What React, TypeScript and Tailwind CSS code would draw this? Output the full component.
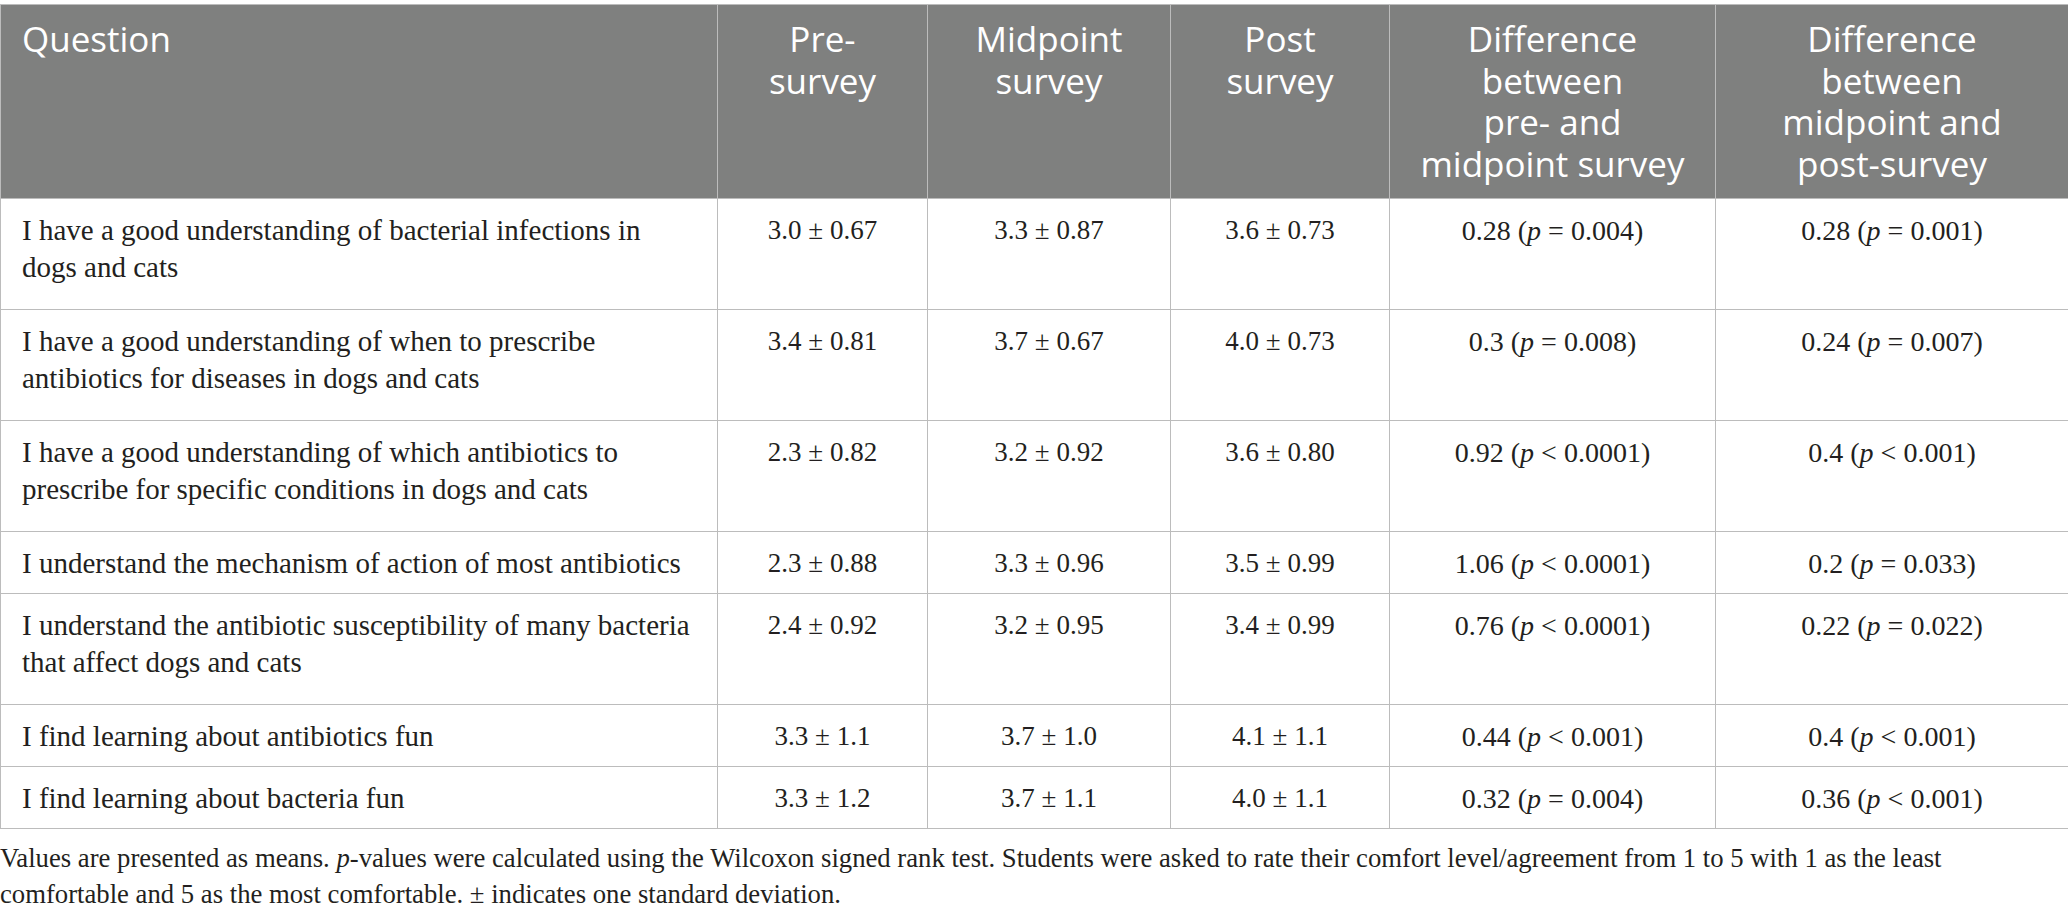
const rows = [
  {
    q: ["I have a good understanding of bacterial infections in", "dogs and cats"],
    pre: "3.0 ± 0.67",
    mid: "3.3 ± 0.87",
    post: "3.6 ± 0.73",
    d1: ["0.28", "=", "0.004"],
    d2: ["0.28", "=", "0.001"],
  },
  {
    q: ["I have a good understanding of when to prescribe", "antibiotics for diseases in dogs and cats"],
    pre: "3.4 ± 0.81",
    mid: "3.7 ± 0.67",
    post: "4.0 ± 0.73",
    d1: ["0.3", "=", "0.008"],
    d2: ["0.24", "=", "0.007"],
  },
  {
    q: ["I have a good understanding of which antibiotics to", "prescribe for specific conditions in dogs and cats"],
    pre: "2.3 ± 0.82",
    mid: "3.2 ± 0.92",
    post: "3.6 ± 0.80",
    d1: ["0.92", "<", "0.0001"],
    d2: ["0.4", "<", "0.001"],
  },
  {
    q: ["I understand the mechanism of action of most antibiotics"],
    pre: "2.3 ± 0.88",
    mid: "3.3 ± 0.96",
    post: "3.5 ± 0.99",
    d1: ["1.06", "<", "0.0001"],
    d2: ["0.2", "=", "0.033"],
  },
  {
    q: ["I understand the antibiotic susceptibility of many bacteria", "that affect dogs and cats"],
    pre: "2.4 ± 0.92",
    mid: "3.2 ± 0.95",
    post: "3.4 ± 0.99",
    d1: ["0.76", "<", "0.0001"],
    d2: ["0.22", "=", "0.022"],
  },
  {
    q: ["I find learning about antibiotics fun"],
    pre: "3.3 ± 1.1",
    mid: "3.7 ± 1.0",
    post: "4.1 ± 1.1",
    d1: ["0.44", "<", "0.001"],
    d2: ["0.4", "<", "0.001"],
  },
  {
    q: ["I find learning about bacteria fun"],
    pre: "3.3 ± 1.2",
    mid: "3.7 ± 1.1",
    post: "4.0 ± 1.1",
    d1: ["0.32", "=", "0.004"],
    d2: ["0.36", "<", "0.001"],
  },
];

const headers = [
  ["Pre-", "survey"],
  ["Midpoint", "survey"],
  ["Post", "survey"],
  ["Difference", "between", "pre- and", "midpoint survey"],
  ["Difference", "between", "midpoint and", "post-survey"],
];

const colWidths = ["w-[717px]", "w-[210px]", "w-[243px]", "w-[219px]", "w-[326px]", "w-[353px]"];

const Diff = ({ v }: { v: string[] }) => (
  <>
    {v[0]} (<i>p</i> {v[1]} {v[2]})
  </>
);

const App = () => {
  return (
    <div className="w-[2068px] min-h-screen bg-white pt-[4px] text-[#231f20] font-['Liberation_Serif',serif]">
      <table className="w-[2068px] table-fixed border-collapse">
        <colgroup>
          {colWidths.map((w, i) => (
            <col key={i} className={w} />
          ))}
        </colgroup>
        <thead>
          <tr className="h-[194px] bg-[#7f807f] text-white font-['Open_Sans',sans-serif] text-[35px] leading-[41.5px]">
            <th className="border border-[#bcbcbc] align-top text-left font-normal pl-[21px] pt-[13px]">
              Question
            </th>
            {headers.map((h, i) => (
              <th key={i} className="border border-[#bcbcbc] align-top text-center font-normal pt-[13px]">
                {h.map((line, j) => (
                  <div key={j}>{line}</div>
                ))}
              </th>
            ))}
          </tr>
        </thead>
        <tbody className="leading-[37px]">
          {rows.map((r, i) => {
            const tall = r.q.length > 1;
            return (
              <tr key={i} className={tall ? "h-[111px]" : "h-[62px]"}>
                <td className="border border-[#bcbcbc] align-top pl-[21px] pt-[13px] text-[29px]">
                  {r.q.map((line, j) => (
                    <div key={j}>{line}</div>
                  ))}
                </td>
                <td className="border border-[#bcbcbc] align-top text-center pt-[13px] text-[27px]">{r.pre}</td>
                <td className="border border-[#bcbcbc] align-top text-center pt-[13px] text-[27px]">{r.mid}</td>
                <td className="border border-[#bcbcbc] align-top text-center pt-[13px] text-[27px]">{r.post}</td>
                <td className="border border-[#bcbcbc] align-top text-center pt-[13px] text-[28px]">
                  <Diff v={r.d1} />
                </td>
                <td className="border border-[#bcbcbc] align-top text-center pt-[13px] text-[28px]">
                  <Diff v={r.d2} />
                </td>
              </tr>
            );
          })}
        </tbody>
      </table>
      <p className="mt-[11px] text-[26.7px] leading-[36px]">
        Values are presented as means. <i>p</i>-values were calculated using the Wilcoxon signed rank test. Students were
        asked to rate their comfort level/agreement from 1 to 5 with 1 as the least
        <br />
        comfortable and 5 as the most comfortable. ± indicates one standard deviation.
      </p>
    </div>
  );
};

export default App;
